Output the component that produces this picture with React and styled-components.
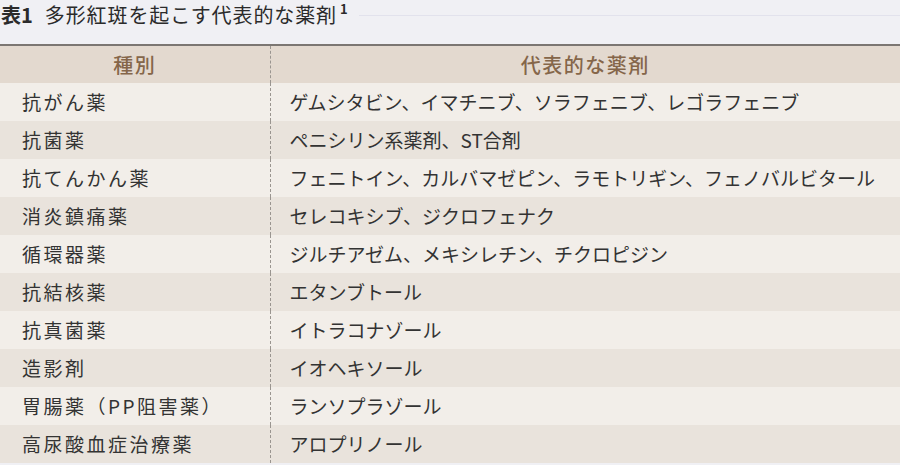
import React from "react";
import styled, { createGlobalStyle } from "styled-components";

const GlobalStyle = createGlobalStyle`
  html, body {
    margin: 0;
    padding: 0;
    background: #f0f0f4;
  }
  body {
    font-family: "Noto Sans CJK JP", "Noto Sans", sans-serif;
    color: #333333;
  }
`;

const Page = styled.div`
  width: 900px;
  height: 465px;
  overflow: hidden;
  background: #f0f0f4;
`;

const TitleRow = styled.div`
  display: flex;
  align-items: flex-start;
  height: 44px;
  padding-left: 1px;
`;

const Title = styled.h1`
  margin: 0;
  font-size: 20px;
  line-height: 29px;
  font-weight: 400;
  letter-spacing: 0.9px;
  color: #2b2b2b;
  white-space: nowrap;
  margin-top: -2px;
  padding-top: 2px;
`;

const Label = styled.span`
  font-weight: 700;
  margin-right: 12px;
  letter-spacing: 0;
`;

const Ref = styled.sup`
  font-size: 13px;
  line-height: 13px;
  font-weight: 700;
  vertical-align: top;
  display: inline-block;
  margin-top: 2px;
  margin-left: 3px;
`;

const Rule = styled.div`
  flex: 1;
  margin-top: 15px;
  margin-left: 10px;
  border-top: 1px solid #e2e2ec;
`;

const Table = styled.table`
  width: 900px;
  border-collapse: collapse;
  table-layout: fixed;
  border-top: 2px solid #7b7672;
`;

const HeadCell = styled.th`
  height: 37px;
  padding: 0;
  background: #e3d9cf;
  color: #85664a;
  font-size: 20px;
  font-weight: 500;
  letter-spacing: 1.5px;
  text-align: center;
  border-right: ${(p) => (p.$first ? "1px dashed #9a9590" : "none")};
`;

const Row = styled.tr`
  background: ${(p) => (p.$alt ? "#e9e3dc" : "#f2eee9")};
`;

const Cell = styled.td`
  height: 38px;
  padding: 0 0 0 ${(p) => (p.$first ? "22px" : "19px")};
  font-size: 19px;
  line-height: 38px;
  letter-spacing: ${(p) => (p.$first ? "2.5px" : "0")};
  white-space: nowrap;
  border-right: ${(p) => (p.$first ? "1px dashed #9a9590" : "none")};
`;

const drugs = [
  ["抗がん薬", "ゲムシタビン、イマチニブ、ソラフェニブ、レゴラフェニブ"],
  ["抗菌薬", "ペニシリン系薬剤、ST合剤"],
  ["抗てんかん薬", "フェニトイン、カルバマゼピン、ラモトリギン、フェノバルビタール"],
  ["消炎鎮痛薬", "セレコキシブ、ジクロフェナク"],
  ["循環器薬", "ジルチアゼム、メキシレチン、チクロピジン"],
  ["抗結核薬", "エタンブトール"],
  ["抗真菌薬", "イトラコナゾール"],
  ["造影剤", "イオヘキソール"],
  ["胃腸薬（PP阻害薬）", "ランソプラゾール"],
  ["高尿酸血症治療薬", "アロプリノール"],
];

export default function App() {
  return (
    <Page>
      <GlobalStyle />
      <TitleRow>
        <Title>
          <Label>表1</Label>多形紅斑を起こす代表的な薬剤<Ref>1</Ref>
        </Title>
        <Rule />
      </TitleRow>
      <Table>
        <colgroup>
          <col style={{ width: 270 }} />
          <col />
        </colgroup>
        <thead>
          <tr>
            <HeadCell $first>種別</HeadCell>
            <HeadCell>代表的な薬剤</HeadCell>
          </tr>
        </thead>
        <tbody>
          {drugs.map(([kind, names], i) => (
            <Row key={kind} $alt={i % 2 === 1}>
              <Cell $first>{kind}</Cell>
              <Cell>{names}</Cell>
            </Row>
          ))}
        </tbody>
      </Table>
    </Page>
  );
}
